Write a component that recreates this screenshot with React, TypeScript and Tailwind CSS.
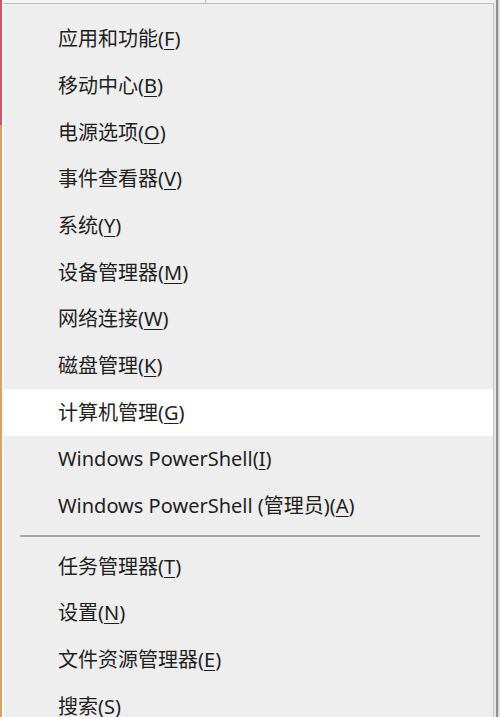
import React from 'react';

type Item = { label: string; key: string; active?: boolean };

const groupA: Item[] = [
  { label: '应用和功能', key: 'F' },
  { label: '移动中心', key: 'B' },
  { label: '电源选项', key: 'O' },
  { label: '事件查看器', key: 'V' },
  { label: '系统', key: 'Y' },
  { label: '设备管理器', key: 'M' },
  { label: '网络连接', key: 'W' },
  { label: '磁盘管理', key: 'K' },
  { label: '计算机管理', key: 'G', active: true },
  { label: 'Windows PowerShell', key: 'I' },
  { label: 'Windows PowerShell (管理员)', key: 'A' },
];

const groupB: Item[] = [
  { label: '任务管理器', key: 'T' },
  { label: '设置', key: 'N' },
  { label: '文件资源管理器', key: 'E' },
  { label: '搜索', key: 'S' },
];

function MenuRow({ item }: { item: Item }) {
  return (
    <div
      className={`flex h-[46.67px] shrink-0 items-center pl-[54px] text-[20px] text-[#1e1e1e] ${
        item.active ? 'bg-white' : ''
      }`}
    >
      <span className="whitespace-nowrap">
        {item.label}(<span className="underline underline-offset-[3px] decoration-1">{item.key}</span>)
      </span>
    </div>
  );
}

export default function App() {
  return (
    <div
      className="flex h-[717px] w-[500px] overflow-hidden bg-[#eeeeee]"
      style={{ fontFamily: '"Noto Sans", "Noto Sans CJK SC", sans-serif' }}
    >
      <div className="flex w-[2px] shrink-0 flex-col">
        <div className="h-[125px] bg-[#c95a62]" />
        <div className="flex-1 bg-[#d8a267]" />
      </div>
      <div className="flex min-w-0 flex-1 flex-col">
        <div className="flex h-[3px] shrink-0">
          <div className="w-[203px] bg-[#f4f4f4]" />
          <div className="w-px bg-[#b8b8b8]" />
          <div className="flex-1 bg-[#f4f4f4]" />
        </div>
        <div className="flex min-h-0 flex-1 flex-col border-l-2 border-t border-r border-l-[#f7f7f7] border-t-[#bdbdbd] border-r-[#c4c4c4] bg-[#eeeeee] pt-[12px]">
          {groupA.map((item) => (
            <MenuRow key={item.key} item={item} />
          ))}
          <div className="flex h-[14px] shrink-0 items-center pl-[16px] pr-[13px]">
            <div className="h-[2px] w-full bg-[#a7a7a7]" />
          </div>
          {groupB.map((item) => (
            <MenuRow key={item.key} item={item} />
          ))}
        </div>
      </div>
      <div className="flex w-[6px] shrink-0">
        <div className="w-[2px] bg-[#e6e6e6]" />
        <div className="w-[2px] bg-[#8e8e8e]" />
        <div className="flex-1 bg-[#dcdcdc]" />
      </div>
    </div>
  );
}
